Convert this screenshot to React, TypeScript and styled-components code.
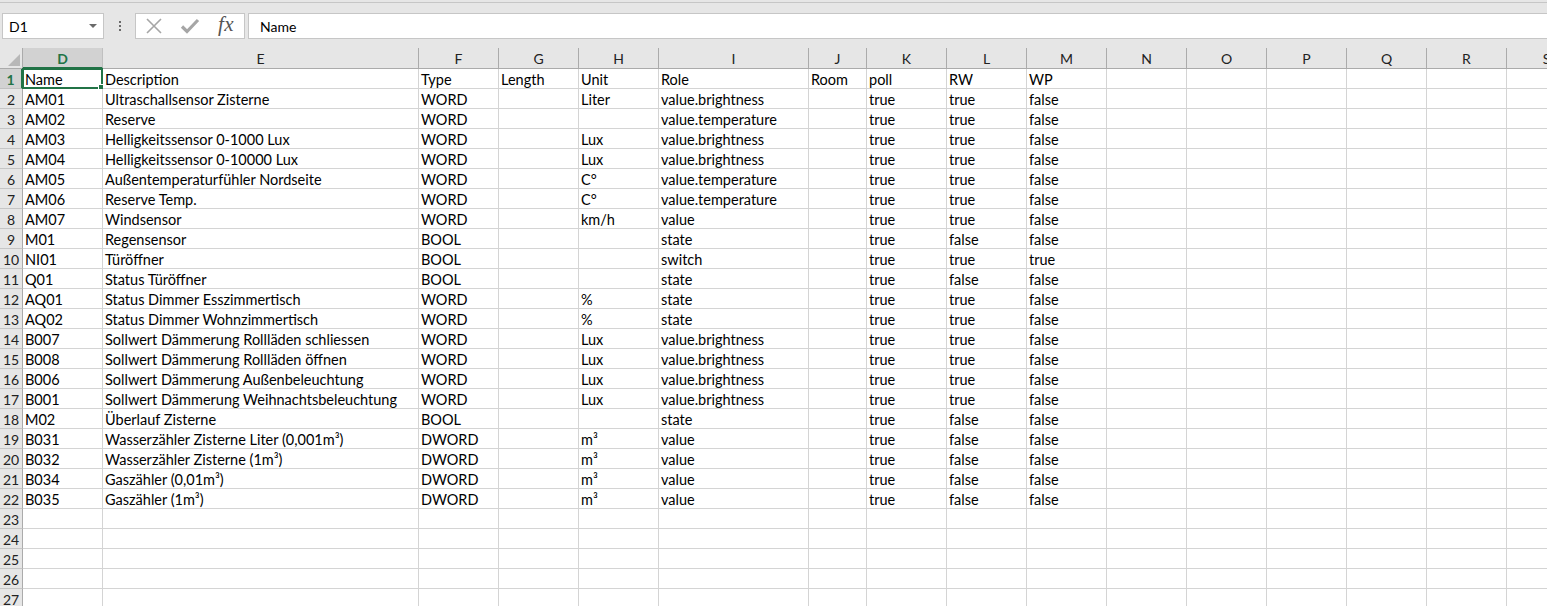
import React from 'react'
import styled, { createGlobalStyle } from 'styled-components'

const GlobalStyle = createGlobalStyle`
    html, body {
        margin: 0;
        padding: 0;
        background: #ffffff;
    }
    body {
        font-family: Lato, "Liberation Sans", sans-serif;
        overflow: hidden;
    }
`

const GREEN = '#217346'
const GRID = '#d4d4d4'
const CHROME = '#e6e6e6'

const COLUMNS: { letter: string; width: number }[] = [
    { letter: 'D', width: 80 },
    { letter: 'E', width: 316 },
    { letter: 'F', width: 80 },
    { letter: 'G', width: 80 },
    { letter: 'H', width: 80 },
    { letter: 'I', width: 150 },
    { letter: 'J', width: 58 },
    { letter: 'K', width: 80 },
    { letter: 'L', width: 80 },
    { letter: 'M', width: 80 },
    { letter: 'N', width: 80 },
    { letter: 'O', width: 80 },
    { letter: 'P', width: 80 },
    { letter: 'Q', width: 80 },
    { letter: 'R', width: 80 },
    { letter: 'S', width: 80 },
]

const DATA: string[][] = [
    ['Name', 'Description', 'Type', 'Length', 'Unit', 'Role', 'Room', 'poll', 'RW', 'WP'],
    ['AM01', 'Ultraschallsensor Zisterne', 'WORD', '', 'Liter', 'value.brightness', '', 'true', 'true', 'false'],
    ['AM02', 'Reserve', 'WORD', '', '', 'value.temperature', '', 'true', 'true', 'false'],
    ['AM03', 'Helligkeitssensor 0-1000 Lux', 'WORD', '', 'Lux', 'value.brightness', '', 'true', 'true', 'false'],
    ['AM04', 'Helligkeitssensor 0-10000 Lux', 'WORD', '', 'Lux', 'value.brightness', '', 'true', 'true', 'false'],
    ['AM05', 'Außentemperaturfühler Nordseite', 'WORD', '', 'C°', 'value.temperature', '', 'true', 'true', 'false'],
    ['AM06', 'Reserve Temp.', 'WORD', '', 'C°', 'value.temperature', '', 'true', 'true', 'false'],
    ['AM07', 'Windsensor', 'WORD', '', 'km/h', 'value', '', 'true', 'true', 'false'],
    ['M01', 'Regensensor', 'BOOL', '', '', 'state', '', 'true', 'false', 'false'],
    ['NI01', 'Türöffner', 'BOOL', '', '', 'switch', '', 'true', 'true', 'true'],
    ['Q01', 'Status Türöffner', 'BOOL', '', '', 'state', '', 'true', 'false', 'false'],
    ['AQ01', 'Status Dimmer Esszimmertisch', 'WORD', '', '%', 'state', '', 'true', 'true', 'false'],
    ['AQ02', 'Status Dimmer Wohnzimmertisch', 'WORD', '', '%', 'state', '', 'true', 'true', 'false'],
    ['B007', 'Sollwert Dämmerung Rollläden schliessen', 'WORD', '', 'Lux', 'value.brightness', '', 'true', 'true', 'false'],
    ['B008', 'Sollwert Dämmerung Rollläden öffnen', 'WORD', '', 'Lux', 'value.brightness', '', 'true', 'true', 'false'],
    ['B006', 'Sollwert Dämmerung Außenbeleuchtung', 'WORD', '', 'Lux', 'value.brightness', '', 'true', 'true', 'false'],
    ['B001', 'Sollwert Dämmerung Weihnachtsbeleuchtung', 'WORD', '', 'Lux', 'value.brightness', '', 'true', 'true', 'false'],
    ['M02', 'Überlauf Zisterne', 'BOOL', '', '', 'state', '', 'true', 'false', 'false'],
    ['B031', 'Wasserzähler Zisterne Liter (0,001m³)', 'DWORD', '', 'm³', 'value', '', 'true', 'false', 'false'],
    ['B032', 'Wasserzähler Zisterne (1m³)', 'DWORD', '', 'm³', 'value', '', 'true', 'false', 'false'],
    ['B034', 'Gaszähler (0,01m³)', 'DWORD', '', 'm³', 'value', '', 'true', 'false', 'false'],
    ['B035', 'Gaszähler (1m³)', 'DWORD', '', 'm³', 'value', '', 'true', 'false', 'false'],
]

const TOTAL_ROWS = 27

const Window = styled.div`
    width: 1547px;
    height: 606px;
    overflow: hidden;
    display: flex;
    flex-direction: column;
    background: #ffffff;
`

const TopStrip = styled.div`
    height: 2px;
    flex: none;
    background: ${CHROME};
    border-bottom: 1px solid #c6c6c6;
`

const FormulaBar = styled.div`
    flex: none;
    display: flex;
    align-items: center;
    height: 45px;
    padding: 10px 0 9px 2px;
    box-sizing: border-box;
    background: ${CHROME};
`

const NameBox = styled.div`
    width: 102px;
    height: 26px;
    box-sizing: border-box;
    background: #ffffff;
    border: 1px solid #c6c6c6;
    display: flex;
    align-items: center;
    justify-content: space-between;
    padding: 0 6px 0 6px;
    font-size: 14px;
    color: #000;
`

const DropArrow = styled.span`
    width: 0;
    height: 0;
    border-left: 4px solid transparent;
    border-right: 4px solid transparent;
    border-top: 4px solid #6a6a6a;
`

const Kebab = styled.div`
    width: 31px;
    display: flex;
    flex-direction: column;
    align-items: center;
    gap: 2px;

    span {
        width: 2px;
        height: 2px;
        background: #6a6a6a;
    }
`

const FxBox = styled.div`
    width: 110px;
    height: 26px;
    box-sizing: border-box;
    background: #ffffff;
    border: 1px solid #c6c6c6;
    display: flex;
    align-items: center;
`

const IconSlot = styled.div`
    width: 36px;
    display: flex;
    align-items: center;
    justify-content: center;
`

const FxText = styled.span`
    font-family: "Liberation Serif", serif;
    font-style: italic;
    font-size: 21px;
    color: #555;
    letter-spacing: 0.5px;
    margin-top: -4px;
`

const FormulaInput = styled.div`
    flex: 1;
    margin-left: 3px;
    height: 26px;
    box-sizing: border-box;
    background: #ffffff;
    border: 1px solid #c6c6c6;
    border-right: none;
    display: flex;
    align-items: center;
    padding-left: 11px;
    font-size: 14px;
    color: #000;
`

const Grid = styled.div<{ $cols: string }>`
    display: grid;
    grid-template-columns: ${(p) => p.$cols};
    grid-template-rows: 21px;
    grid-auto-rows: 20px;
    flex: none;
`

const Corner = styled.div`
    background: ${CHROME};
    border-right: 1px solid #ababab;
    border-bottom: 1px solid #ababab;
    box-sizing: border-box;
    position: relative;
    overflow: hidden;

    &::after {
        content: '';
        position: absolute;
        right: 2px;
        bottom: 2px;
        width: 0;
        height: 0;
        border-left: 12px solid transparent;
        border-bottom: 12px solid #b8b8b8;
    }
`

const ColHeader = styled.div<{ $active?: boolean }>`
    background: ${(p) => (p.$active ? '#d2d2d2' : CHROME)};
    border-right: 1px solid ${(p) => (p.$active ? '#c0c0c0' : '#ababab')};
    border-bottom: ${(p) => (p.$active ? `2px solid ${GREEN}` : '1px solid #ababab')};
    box-sizing: border-box;
    display: flex;
    align-items: center;
    justify-content: center;
    padding-top: 1px;
    font-size: 14px;
    font-weight: ${(p) => (p.$active ? 700 : 400)};
    color: ${(p) => (p.$active ? GREEN : '#222')};
    white-space: nowrap;
    overflow: hidden;
`

const RowHeader = styled.div<{ $active?: boolean }>`
    background: ${(p) => (p.$active ? '#d2d2d2' : CHROME)};
    border-right: ${(p) => (p.$active ? `2px solid ${GREEN}` : '1px solid #ababab')};
    border-bottom: 1px solid ${(p) => (p.$active ? '#c0c0c0' : '#c6c6c6')};
    box-sizing: border-box;
    display: flex;
    align-items: center;
    justify-content: center;
    padding-top: 1px;
    font-size: 14px;
    font-weight: ${(p) => (p.$active ? 700 : 400)};
    color: ${(p) => (p.$active ? GREEN : '#222')};
`

const Cell = styled.div<{ $selected?: boolean }>`
    position: relative;
    border-right: 1px solid ${GRID};
    border-bottom: 1px solid ${GRID};
    box-sizing: border-box;
    padding: 1px 0 0 2px;
    font-size: 14.5px;
    line-height: 19px;
    color: #000;
    white-space: nowrap;
    overflow: visible;
    background: #ffffff;

    ${(p) =>
        p.$selected &&
        `
        &::before {
            content: '';
            position: absolute;
            left: -1px;
            top: -1px;
            right: -1px;
            bottom: -1px;
            border: 2px solid ${GREEN};
            pointer-events: none;
        }
        &::after {
            content: '';
            position: absolute;
            right: -3px;
            bottom: -3px;
            width: 5px;
            height: 5px;
            background: ${GREEN};
            border: 1px solid #ffffff;
        }
    `}
`

function CrossIcon() {
    return (
        <svg width="18" height="18" viewBox="0 0 18 18">
            <path d="M2 2 L16 16 M16 2 L2 16" stroke="#a6a6a6" strokeWidth="1.6" fill="none" />
        </svg>
    )
}

function CheckIcon() {
    return (
        <svg width="20" height="18" viewBox="0 0 20 18">
            <path d="M2 9.5 L7 14.5 L18 3" stroke="#a6a6a6" strokeWidth="3.2" fill="none" />
        </svg>
    )
}

export default function App() {
    const cols = ['23px', ...COLUMNS.map((c) => `${c.width}px`)].join(' ')

    return (
        <Window>
            <GlobalStyle />
            <TopStrip />
            <FormulaBar>
                <NameBox>
                    D1
                    <DropArrow />
                </NameBox>
                <Kebab>
                    <span />
                    <span />
                    <span />
                </Kebab>
                <FxBox>
                    <IconSlot>
                        <CrossIcon />
                    </IconSlot>
                    <IconSlot>
                        <CheckIcon />
                    </IconSlot>
                    <IconSlot>
                        <FxText>fx</FxText>
                    </IconSlot>
                </FxBox>
                <FormulaInput>Name</FormulaInput>
            </FormulaBar>
            <Grid $cols={cols}>
                <Corner />
                {COLUMNS.map((c) => (
                    <ColHeader key={c.letter} $active={c.letter === 'D'}>
                        {c.letter}
                    </ColHeader>
                ))}
                {Array.from({ length: TOTAL_ROWS }, (_, r) => (
                    <React.Fragment key={r}>
                        <RowHeader $active={r === 0}>{r + 1}</RowHeader>
                        {COLUMNS.map((c, ci) => (
                            <Cell key={c.letter} $selected={r === 0 && ci === 0}>
                                {DATA[r]?.[ci] ?? ''}
                            </Cell>
                        ))}
                    </React.Fragment>
                ))}
            </Grid>
        </Window>
    )
}
